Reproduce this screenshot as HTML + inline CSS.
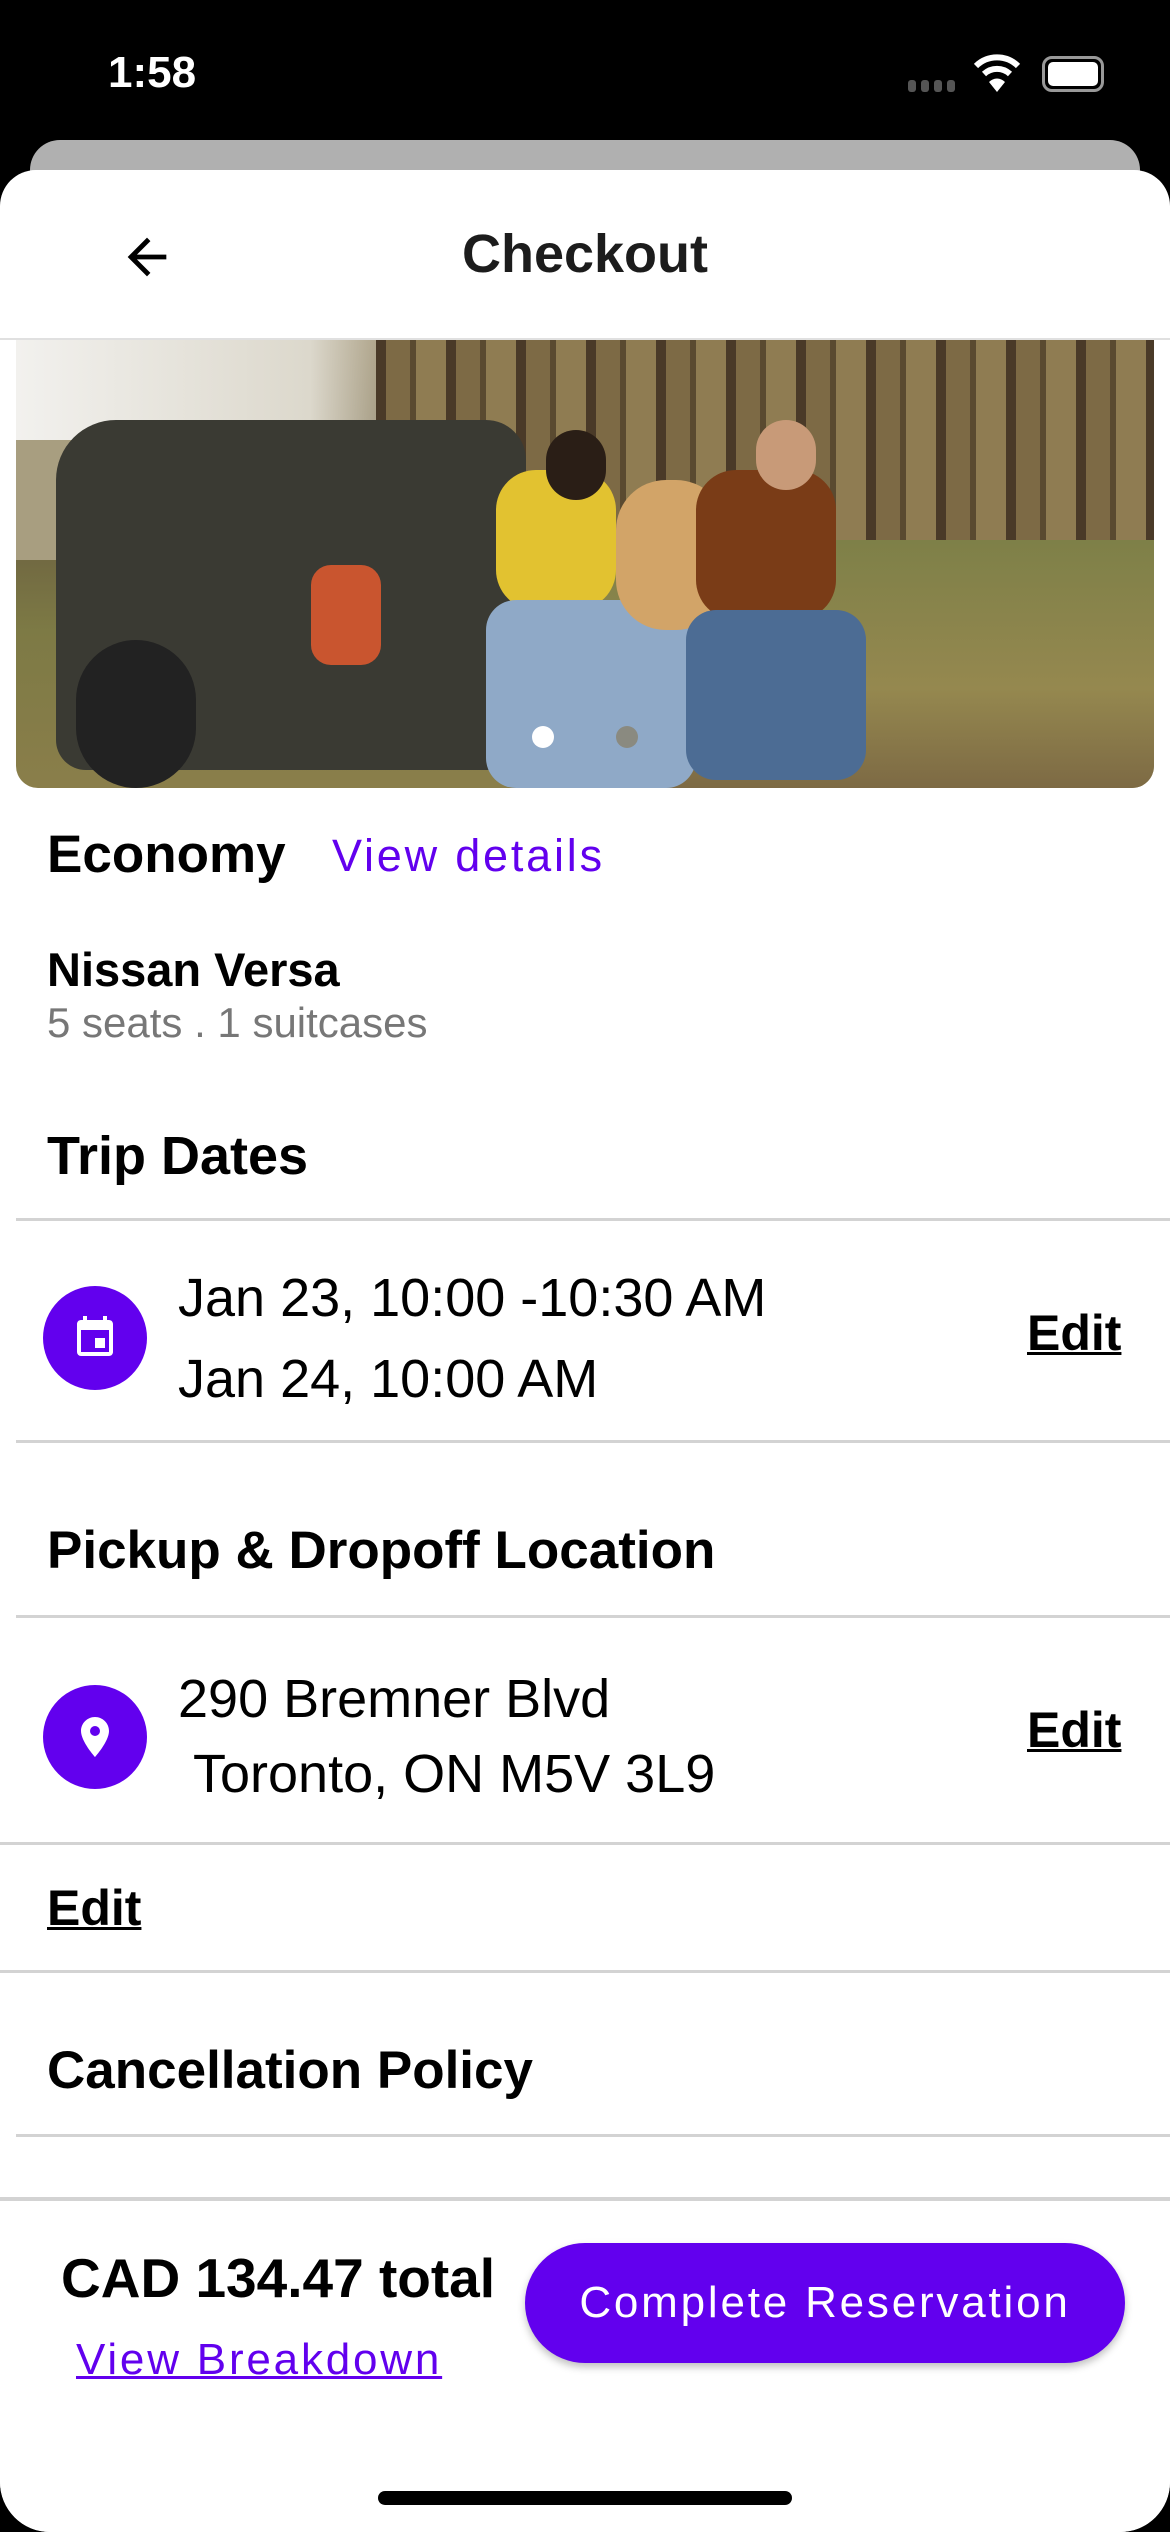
<!DOCTYPE html>
<html><head><meta charset="utf-8"><style>
*{margin:0;padding:0;box-sizing:border-box}
body{width:1170px;height:2532px;background:#000;font-family:"Liberation Sans",sans-serif;position:relative;overflow:hidden}
.abs{position:absolute}
.time{left:108px;top:48px;color:#fff;font-size:44px;font-weight:bold}
.sheetback{left:30px;top:140px;width:1110px;height:80px;background:#b0b0b0;border-radius:30px}
.sheet{left:0;top:170px;width:1170px;height:2362px;background:#fff;border-radius:36px 36px 50px 50px;overflow:hidden}
.t{position:absolute;color:#000;white-space:nowrap}
.b{font-weight:bold}
.line{position:absolute;height:3px;background:#d3d3d3}
.edit{font-size:50px;font-weight:bold;text-decoration:underline;text-decoration-thickness:3px}
.circ{position:absolute;width:104px;height:104px;border-radius:52px;background:#6200ee}
</style></head><body>
<div class="abs time">1:58</div>
<div class="abs" style="left:908px;top:80px;display:flex;gap:5px"><i style="width:8px;height:12px;background:#555;border-radius:3px"></i><i style="width:8px;height:12px;background:#555;border-radius:3px"></i><i style="width:8px;height:12px;background:#555;border-radius:3px"></i><i style="width:8px;height:12px;background:#555;border-radius:3px"></i></div>
<svg class="abs" style="left:972px;top:52px" width="50" height="42" viewBox="0 0 50 42"><path d="M4 14 A30 30 0 0 1 46 14" stroke="#fff" stroke-width="6" fill="none"/><path d="M12 22 A19 19 0 0 1 38 22" stroke="#fff" stroke-width="6" fill="none"/><path d="M25 40 L17 30 A11 11 0 0 1 33 30 Z" fill="#fff"/></svg>
<div class="abs" style="left:1042px;top:56px;width:62px;height:36px;border:3px solid #999;border-radius:10px;padding:3px"><div style="width:100%;height:100%;background:#fff;border-radius:5px"></div></div>
<div class="abs sheetback"></div>
<div class="abs sheet">
 <svg class="abs" style="left:118px;top:58px" width="58" height="58" viewBox="0 0 24 24"><path d="M20 11H7.83l5.59-5.59L12 4l-8 8 8 8 1.41-1.41L7.83 13H20v-2z" fill="#000"/></svg>
 <div class="t b" style="left:0;width:1170px;text-align:center;top:53px;font-size:54px;color:#1c1c1c">Checkout</div>
 <div class="line" style="left:0;width:1170px;top:168px;height:2px;background:#e0e0e0"></div>
 <div class="abs" style="left:16px;top:170px;width:1138px;height:448px;border-radius:0 0 22px 22px;overflow:hidden;background:linear-gradient(180deg,#8a7a55 0%,#6b6040 40%,#7d7a45 65%,#8a7e4a 100%)">
  <div class="abs" style="left:0;top:0;width:420px;height:160px;background:linear-gradient(90deg,#f2f1ee,#dcd8cc 70%,rgba(200,190,170,0))"></div>
  <div class="abs" style="left:0;top:100px;width:200px;height:120px;background:#a89e80;border-radius:0 60% 0 0"></div>
  <div class="abs" style="left:360px;top:0;width:778px;height:230px;background:repeating-linear-gradient(90deg,#4a3a28 0 10px,#7d6a45 10px 34px,#5a4a30 34px 40px,#8f7c52 40px 70px)"></div>
  <div class="abs" style="left:500px;top:200px;width:638px;height:248px;background:linear-gradient(180deg,#7e8048,#95884f 60%,#7d6a44)"></div>
  <div class="abs" style="left:40px;top:80px;width:470px;height:350px;background:#3a3a33;border-radius:60px 40px 20px 30px"></div>
  <div class="abs" style="left:60px;top:300px;width:120px;height:148px;background:#222;border-radius:60px"></div>
  <div class="abs" style="left:295px;top:225px;width:70px;height:100px;background:#c9552f;border-radius:20px"></div>
  <div class="abs" style="left:480px;top:130px;width:120px;height:140px;background:#e2c230;border-radius:40px"></div>
  <div class="abs" style="left:470px;top:260px;width:210px;height:188px;background:#8fa9c7;border-radius:30px"></div>
  <div class="abs" style="left:600px;top:140px;width:110px;height:150px;background:#d2a468;border-radius:50px"></div>
  <div class="abs" style="left:680px;top:130px;width:140px;height:150px;background:#7a3c17;border-radius:40px"></div>
  <div class="abs" style="left:670px;top:270px;width:180px;height:170px;background:#4c6c94;border-radius:30px"></div>
  <div class="abs" style="left:530px;top:90px;width:60px;height:70px;background:#2a1e16;border-radius:30px"></div>
  <div class="abs" style="left:740px;top:80px;width:60px;height:70px;background:#c89a78;border-radius:30px"></div>
  <div class="abs" style="left:516px;top:386px;width:22px;height:22px;border-radius:11px;background:#fff"></div>
  <div class="abs" style="left:600px;top:386px;width:22px;height:22px;border-radius:11px;background:#8a8a80"></div>
 </div>
 <div class="t b" style="left:47px;top:654px;font-size:53px">Economy</div>
 <div class="t" style="left:332px;top:660px;font-size:45px;color:#6200ee;letter-spacing:2.8px">View details</div>
 <div class="t b" style="left:47px;top:772px;font-size:47px">Nissan Versa</div>
 <div class="t" style="left:47px;top:829px;font-size:42px;color:#777">5 seats . 1 suitcases</div>
 <div class="t b" style="left:47px;top:955px;font-size:54px">Trip Dates</div>
 <div class="line" style="left:16px;width:1154px;top:1048px"></div>
 <div class="circ" style="left:43px;top:1116px"></div>
 <svg class="abs" style="left:71px;top:1144px" width="48" height="48" viewBox="0 0 24 24"><path d="M17 12h-5v5h5v-5zM16 1v2H8V1H6v2H5c-1.11 0-2 .9-2 2v14a2 2 0 002 2h14c1.1 0 2-.9 2-2V5c0-1.1-.9-2-2-2h-1V1h-2zm3 18H5V8h14v11z" fill="#fff"/></svg>
 <div class="t" style="left:178px;top:1097px;font-size:54px">Jan 23, 10:00 -10:30 AM</div>
 <div class="t" style="left:178px;top:1178px;font-size:54px">Jan 24, 10:00 AM</div>
 <div class="t edit" style="left:1027px;top:1134px">Edit</div>
 <div class="line" style="left:16px;width:1154px;top:1270px"></div>
 <div class="t b" style="left:47px;top:1350px;font-size:53px">Pickup &amp; Dropoff Location</div>
 <div class="line" style="left:16px;width:1154px;top:1445px"></div>
 <div class="circ" style="left:43px;top:1515px"></div>
 <svg class="abs" style="left:71px;top:1543px" width="48" height="48" viewBox="0 0 24 24"><path d="M12 2C8.13 2 5 5.13 5 9c0 5.25 7 13 7 13s7-7.75 7-13c0-3.87-3.13-7-7-7zm0 9.5a2.5 2.5 0 010-5 2.5 2.5 0 010 5z" fill="#fff"/></svg>
 <div class="t" style="left:178px;top:1498px;font-size:54px">290 Bremner Blvd</div>
 <div class="t" style="left:178px;top:1573px;font-size:54px">&nbsp;Toronto, ON M5V 3L9</div>
 <div class="t edit" style="left:1027px;top:1531px">Edit</div>
 <div class="line" style="left:0;width:1170px;top:1672px"></div>
 <div class="t edit" style="left:47px;top:1709px">Edit</div>
 <div class="line" style="left:0;width:1170px;top:1800px"></div>
 <div class="t b" style="left:47px;top:1870px;font-size:53px">Cancellation Policy</div>
 <div class="line" style="left:16px;width:1154px;top:1964px"></div>
 <div class="abs" style="left:0;top:2027px;width:1170px;height:400px;background:#fff;border-top:4px solid #d3d3d3"></div>
 <div class="t b" style="left:61px;top:2076px;font-size:55px">CAD 134.47 total</div>
 <div class="t" style="left:76px;top:2165px;font-size:44px;color:#6200ee;letter-spacing:2.8px;text-decoration:underline;text-decoration-thickness:3px">View Breakdown</div>
 <div class="abs" style="left:525px;top:2073px;width:600px;height:120px;border-radius:60px;background:#6200ee;box-shadow:0 4px 8px rgba(0,0,0,.25);color:#fff;font-size:44px;letter-spacing:2.8px;text-align:center;line-height:120px;white-space:nowrap">Complete Reservation</div>
 <div class="abs" style="left:378px;top:2321px;width:414px;height:14px;border-radius:7px;background:#000"></div>
</div>
</body></html>
